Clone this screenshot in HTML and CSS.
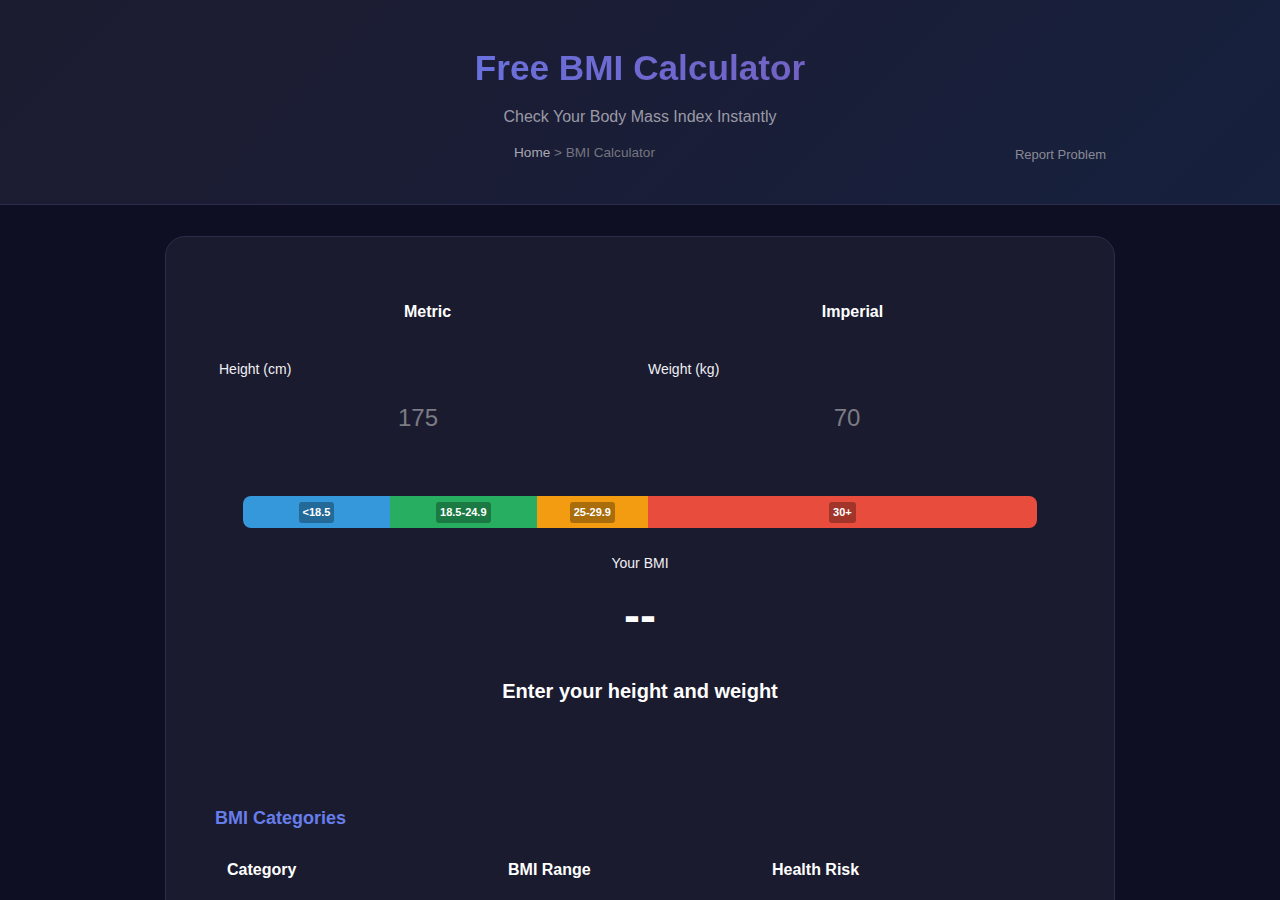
FILE: index.html
```html
<!DOCTYPE html>
<html lang="en">
<head>
<meta charset="utf-8">
<title>Free BMI Calculator</title>
<link rel="stylesheet" href="styles.css">
</head>
<body>
<header class="site-header">
  <h1 class="title">Free BMI Calculator</h1>
  <p class="subtitle">Check Your Body Mass Index Instantly</p>
  <div class="crumb-row">
    <nav class="breadcrumb"><a class="crumb-home" href="#">Home</a> &gt; BMI Calculator</nav>
    <a class="report" href="#">Report Problem</a>
  </div>
</header>
<main class="main">
  <section class="card">
    <div class="tabs">
      <button class="tab">Metric</button>
      <button class="tab">Imperial</button>
    </div>
    <div class="inputs">
      <div class="field">
        <label class="label" for="h">Height (cm)</label>
        <input class="num" id="h" type="text" value="175">
      </div>
      <div class="field">
        <label class="label" for="w">Weight (kg)</label>
        <input class="num" id="w" type="text" value="70">
      </div>
    </div>
    <div class="scale">
      <div class="seg seg-under"><span class="badge">&lt;18.5</span></div>
      <div class="seg seg-normal"><span class="badge">18.5-24.9</span></div>
      <div class="seg seg-over"><span class="badge">25-29.9</span></div>
      <div class="seg seg-obese"><span class="badge">30+</span></div>
    </div>
    <div class="result">
      <div class="result-label">Your BMI</div>
      <div class="result-value">--</div>
      <div class="result-text">Enter your height and weight</div>
    </div>
    <h2 class="section-title">BMI Categories</h2>
    <table class="cats">
      <thead>
        <tr>
          <th class="c1">Category</th>
          <th class="c2">BMI Range</th>
          <th class="c3">Health Risk</th>
        </tr>
      </thead>
    </table>
  </section>
</main>
</body>
</html>
```
FILE: styles.css
```css
* { box-sizing: border-box; }
html, body { margin: 0; padding: 0; }
body {
  background: #0f0f23;
  color: #fff;
  font-family: "Liberation Sans", Arial, sans-serif;
}
.site-header {
  height: 205px;
  padding: 46px 20px 0;
  text-align: center;
  background: linear-gradient(135deg, #1c1c30 0%, #1a1d36 50%, #16213e 100%);
  border-bottom: 1px solid #2c2c4e;
}
.title {
  margin: 0;
  font-size: 35.2px;
  line-height: 43px;
  font-weight: 700;
  background: linear-gradient(90deg, #6a70dc 0%, #7262c4 100%);
  -webkit-background-clip: text;
  background-clip: text;
  color: transparent;
  display: inline-block;
}
.subtitle {
  margin: 18px 0 0;
  font-size: 16px;
  line-height: 19px;
  color: #9a9aa6;
}
.crumb-row {
  display: flex;
  max-width: 952px;
  margin: 19px auto 0;
  align-items: flex-start;
}
.breadcrumb {
  flex: 1;
  text-align: center;
  font-size: 13.6px;
  line-height: 16px;
  color: #75757f;
}
.crumb-home { color: #a8a8b2; text-decoration: none; }
.report {
  padding: 2px 10px 0;
  font-size: 13px;
  line-height: 16px;
  color: #8a8a96;
  text-decoration: none;
}
.main {
  padding: 31px 0 0;
}
.card {
  width: 950px;
  margin: 0 auto;
  background: #1b1b2f;
  border: 1px solid #2c2c4c;
  border-radius: 20px;
  padding: 50px 49px 60px;
}
.tabs {
  display: flex;
}
.tab {
  flex: 1;
  background: transparent;
  border: 0;
  padding: 15px;
  font-family: "Liberation Sans", Arial, sans-serif;
  font-size: 16px;
  line-height: 19px;
  font-weight: 700;
  color: #fff;
}
.inputs {
  display: grid;
  grid-template-columns: 398px 398px;
  column-gap: 31px;
  padding-left: 4px;
  margin-top: 25px;
}
.field { display: flex; flex-direction: column; }
.label {
  font-size: 14px;
  line-height: 16px;
  color: #f0f0f4;
}
.num {
  margin-top: 15px;
  width: 100%;
  background: transparent;
  border: 0;
  outline: none;
  padding: 12px;
  text-align: center;
  font-family: "Liberation Sans", Arial, sans-serif;
  font-size: 24px;
  line-height: 28px;
  color: #7c7c84;
}
.scale {
  display: flex;
  height: 32px;
  margin: 52px 28px 0;
  border-radius: 8px;
  overflow: hidden;
}
.seg {
  display: flex;
  align-items: center;
  justify-content: center;
}
.seg-under { flex: 0 0 18.5%; background: #3498db; }
.seg-normal { flex: 0 0 18.5%; background: #27ae60; }
.seg-over { flex: 0 0 14%; background: #f39c12; }
.seg-obese { flex: 1; background: #e74c3c; }
.badge {
  background: rgba(0, 0, 0, 0.3);
  border-radius: 3px;
  padding: 4px 4px;
  font-size: 11px;
  line-height: 13px;
  font-weight: 700;
  color: #fff;
}
.result { text-align: center; }
.result-label {
  margin-top: 27px;
  font-size: 14px;
  line-height: 16px;
  color: #f0f0f4;
}
.result-value {
  margin-top: 16px;
  font-size: 48px;
  line-height: 58px;
  font-weight: 700;
  color: #fff;
}
.result-text {
  margin-top: 34px;
  font-size: 20px;
  line-height: 24px;
  font-weight: 700;
  color: #fff;
}
.section-title {
  margin: 104px 0 0;
  font-size: 18px;
  line-height: 22px;
  font-weight: 700;
  color: #667eea;
}
.cats {
  margin-top: 20px;
  width: 100%;
  border-collapse: collapse;
}
.cats th {
  text-align: left;
  padding: 12px;
  font-size: 16px;
  line-height: 18px;
  font-weight: 700;
  color: #fff;
}
.c1 { width: 281px; }
.c2 { width: 264px; }
```
